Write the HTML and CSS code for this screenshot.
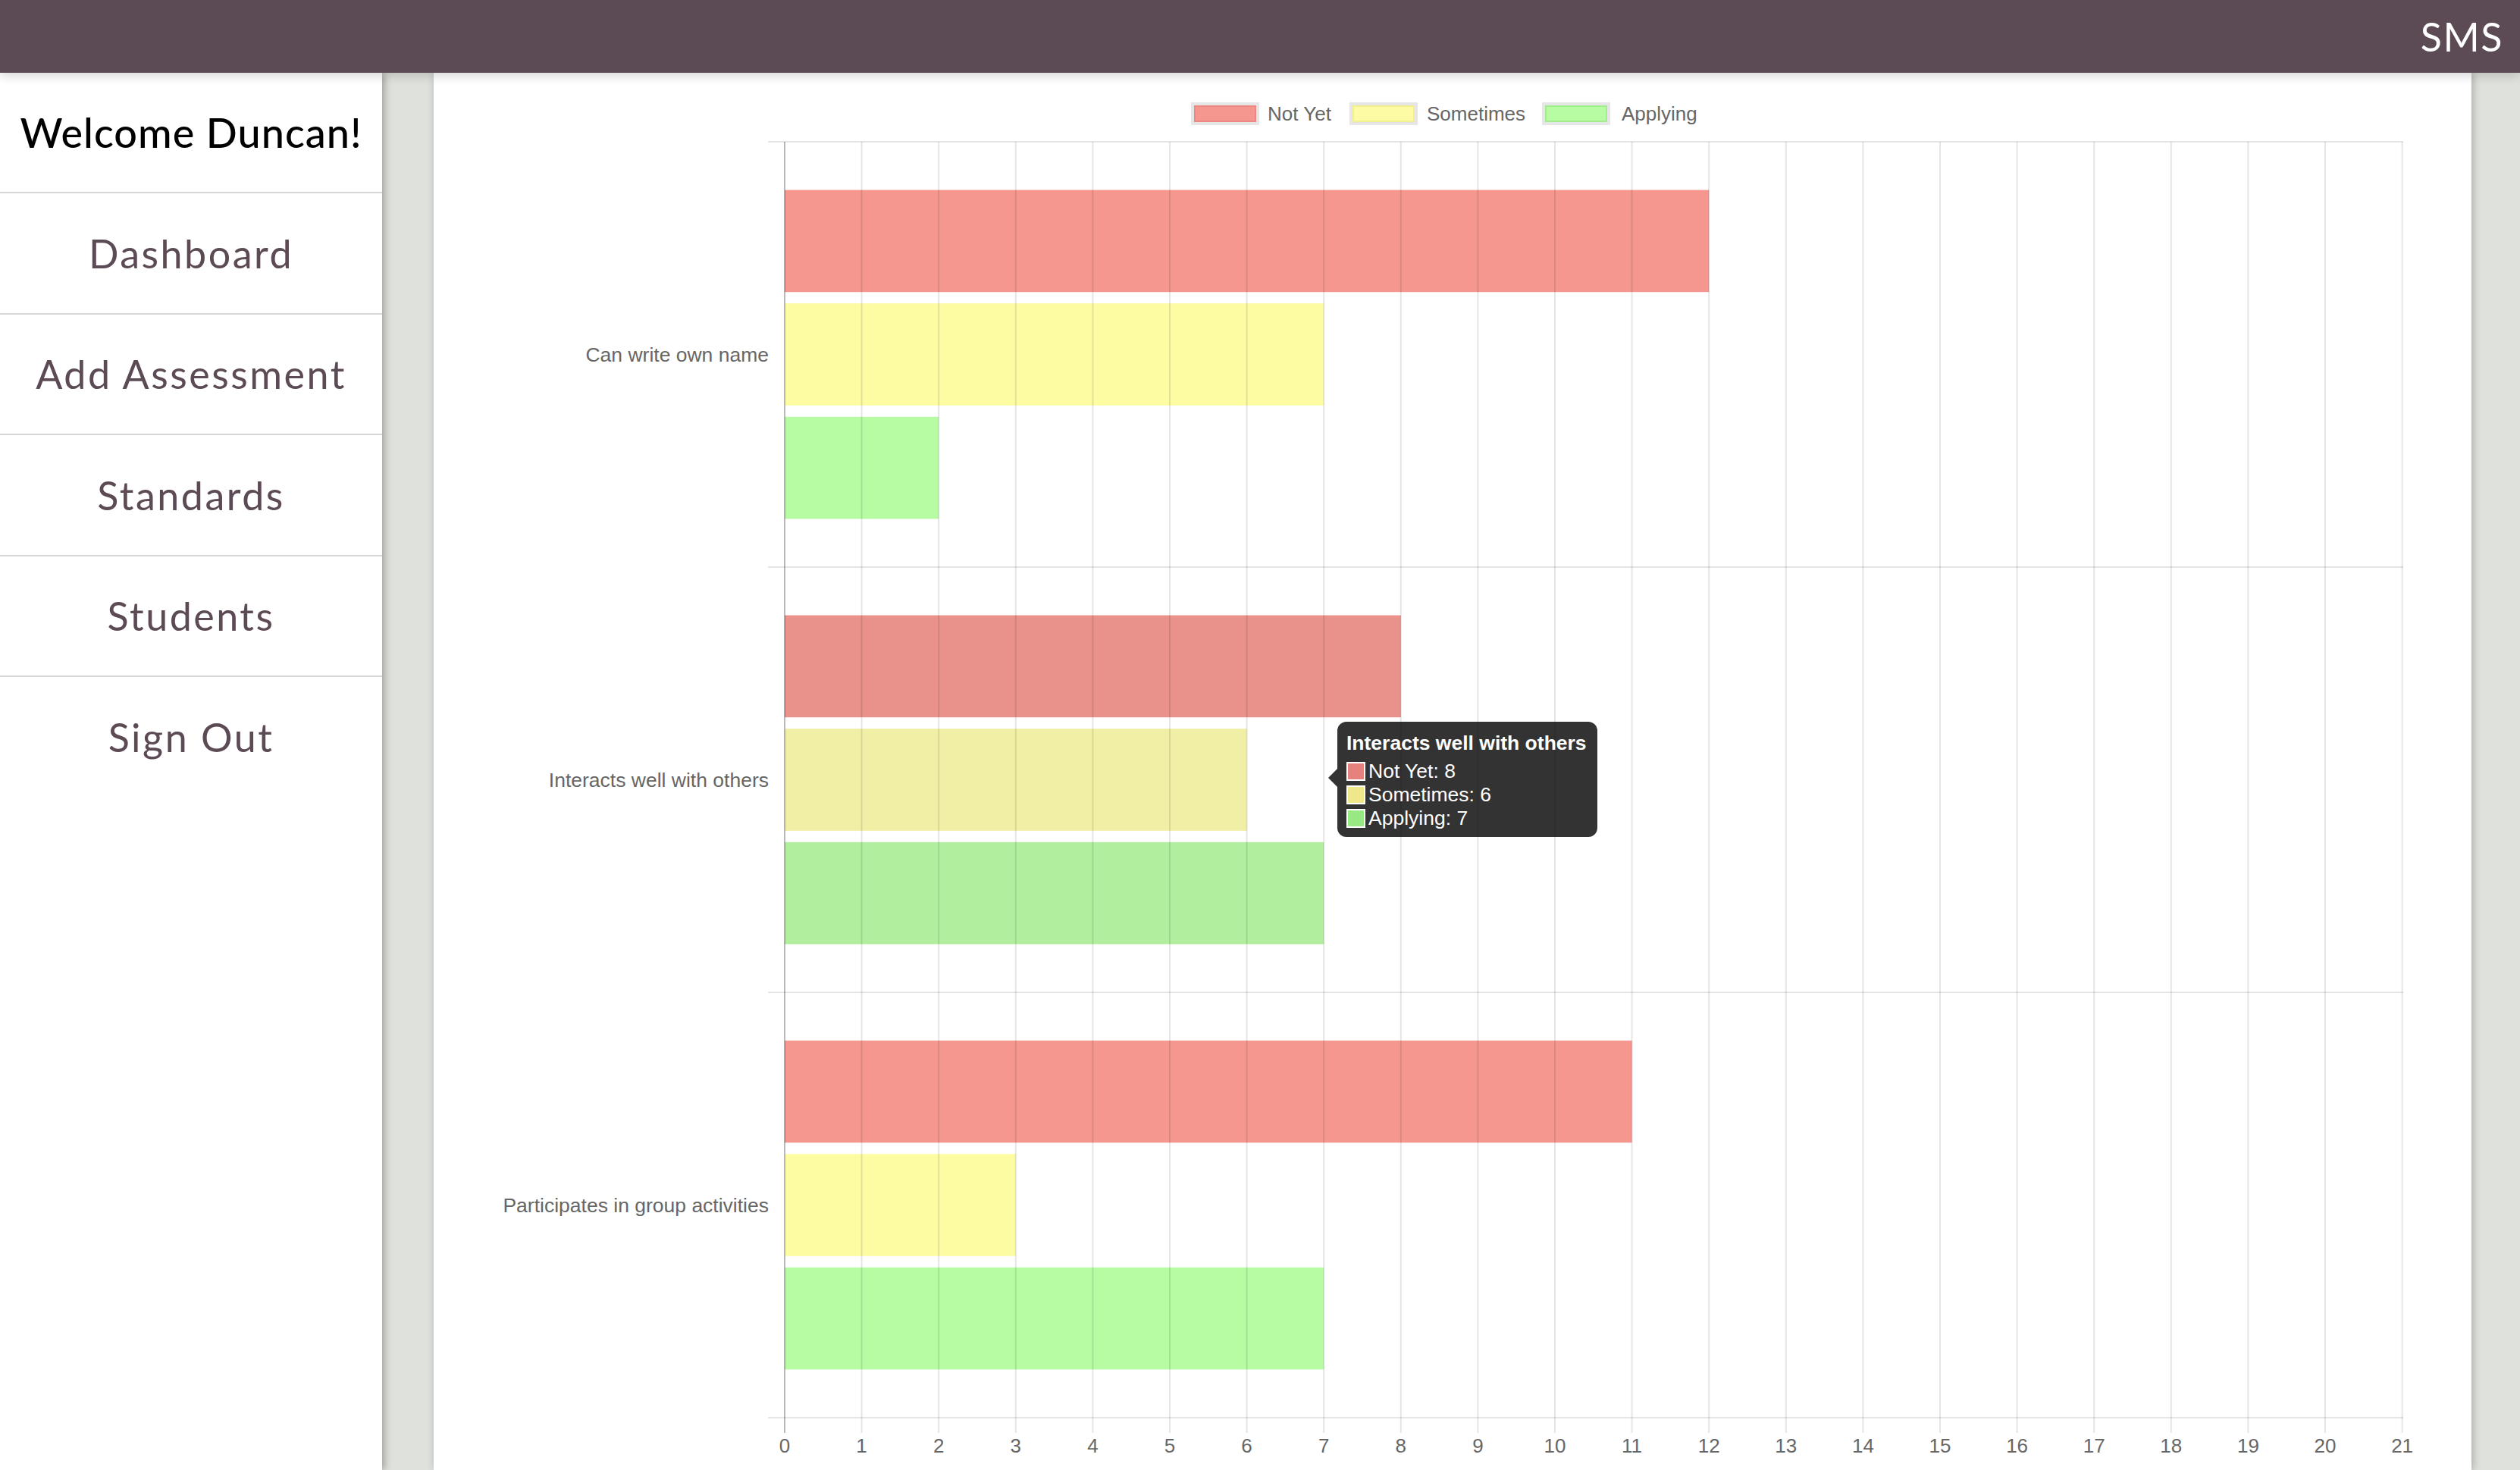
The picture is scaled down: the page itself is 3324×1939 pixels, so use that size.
FILE: index.html
```html
<!DOCTYPE html>
<html lang="en">
<head>
<meta charset="utf-8">
<title>SMS Dashboard</title>
<link rel="stylesheet" href="styles.css">
</head>
<body>
<header class="topbar">
  <span class="brand">SMS</span>
</header>
<div class="layout">
  <nav class="sidebar">
    <div class="welcome">Welcome Duncan!</div>
    <a class="nav-item" href="#">Dashboard</a>
    <a class="nav-item" href="#">Add Assessment</a>
    <a class="nav-item" href="#">Standards</a>
    <a class="nav-item" href="#">Students</a>
    <a class="nav-item nav-last" href="#">Sign Out</a>
  </nav>
  <main class="card">
    <svg class="chart" width="2688" height="1843" viewBox="0 0 2688 1843" xmlns="http://www.w3.org/2000/svg">
      <!-- legend -->
      <g class="legend">
        <rect x="1001" y="41" width="86" height="26" fill="#f5978f" stroke="#e6e6e6" stroke-width="4"/>
        <rect x="1004" y="44" width="80" height="20" fill="#f5978f" stroke="#ec8880" stroke-width="2"/>
        <text x="1100" y="63">Not Yet</text>
        <rect x="1210" y="41" width="86" height="26" fill="#fdfca5" stroke="#e6e6e6" stroke-width="4"/>
        <rect x="1213" y="44" width="80" height="20" fill="#fdfca5" stroke="#f2ef8e" stroke-width="2"/>
        <text x="1310" y="63">Sometimes</text>
        <rect x="1464" y="41" width="86" height="26" fill="#b7fba3" stroke="#e6e6e6" stroke-width="4"/>
        <rect x="1467" y="44" width="80" height="20" fill="#b7fba3" stroke="#a2ee8e" stroke-width="2"/>
        <text x="1567" y="63">Applying</text>
      </g>
      <!-- bars -->
      <g class="bars">
        <rect x="463" y="154.6" width="1219.2" height="134.6" fill="#f5978f"/>
        <rect x="463" y="304.2" width="711.2" height="134.6" fill="#fdfca3"/>
        <rect x="463" y="453.8" width="203.2" height="134.6" fill="#b7fba3"/>
        <rect x="463" y="715.6" width="812.8" height="134.6" fill="#e8928b"/>
        <rect x="463" y="865.2" width="609.6" height="134.6" fill="#f1efa5"/>
        <rect x="463" y="1014.8" width="711.2" height="134.6" fill="#b1ef9e"/>
        <rect x="463" y="1276.6" width="1117.6" height="134.6" fill="#f5978f"/>
        <rect x="463" y="1426.2" width="304.8" height="134.6" fill="#fdfca3"/>
        <rect x="463" y="1575.8" width="711.2" height="134.6" fill="#b7fba3"/>
      </g>
      <!-- grid -->
      <g class="grid" stroke="rgba(0,0,0,0.1)" stroke-width="2">
        <line x1="441" y1="91" x2="2598" y2="91"/>
        <line x1="441" y1="652" x2="2598" y2="652"/>
        <line x1="441" y1="1213" x2="2598" y2="1213"/>
        <line x1="441" y1="1774" x2="2598" y2="1774"/>
        <line x1="564.6" y1="91" x2="564.6" y2="1794"/>
        <line x1="666.2" y1="91" x2="666.2" y2="1794"/>
        <line x1="767.8" y1="91" x2="767.8" y2="1794"/>
        <line x1="869.4" y1="91" x2="869.4" y2="1794"/>
        <line x1="971" y1="91" x2="971" y2="1794"/>
        <line x1="1072.6" y1="91" x2="1072.6" y2="1794"/>
        <line x1="1174.2" y1="91" x2="1174.2" y2="1794"/>
        <line x1="1275.8" y1="91" x2="1275.8" y2="1794"/>
        <line x1="1377.4" y1="91" x2="1377.4" y2="1794"/>
        <line x1="1479" y1="91" x2="1479" y2="1794"/>
        <line x1="1580.6" y1="91" x2="1580.6" y2="1794"/>
        <line x1="1682.2" y1="91" x2="1682.2" y2="1794"/>
        <line x1="1783.8" y1="91" x2="1783.8" y2="1794"/>
        <line x1="1885.4" y1="91" x2="1885.4" y2="1794"/>
        <line x1="1987" y1="91" x2="1987" y2="1794"/>
        <line x1="2088.6" y1="91" x2="2088.6" y2="1794"/>
        <line x1="2190.2" y1="91" x2="2190.2" y2="1794"/>
        <line x1="2291.8" y1="91" x2="2291.8" y2="1794"/>
        <line x1="2393.4" y1="91" x2="2393.4" y2="1794"/>
        <line x1="2495" y1="91" x2="2495" y2="1794"/>
        <line x1="2596.6" y1="91" x2="2596.6" y2="1794"/>
        <line x1="463" y1="91" x2="463" y2="1794" stroke="rgba(0,0,0,0.28)"/>
      </g>
      <!-- y labels -->
      <g class="ylabels">
        <text x="442" y="381">Can write own name</text>
        <text x="442" y="942">Interacts well with others</text>
        <text x="442" y="1503">Participates in group activities</text>
      </g>
      <!-- x labels -->
      <g class="xlabels">
        <text x="463" y="1820">0</text>
        <text x="564.6" y="1820">1</text>
        <text x="666.2" y="1820">2</text>
        <text x="767.8" y="1820">3</text>
        <text x="869.4" y="1820">4</text>
        <text x="971" y="1820">5</text>
        <text x="1072.6" y="1820">6</text>
        <text x="1174.2" y="1820">7</text>
        <text x="1275.8" y="1820">8</text>
        <text x="1377.4" y="1820">9</text>
        <text x="1479" y="1820">10</text>
        <text x="1580.6" y="1820">11</text>
        <text x="1682.2" y="1820">12</text>
        <text x="1783.8" y="1820">13</text>
        <text x="1885.4" y="1820">14</text>
        <text x="1987" y="1820">15</text>
        <text x="2088.6" y="1820">16</text>
        <text x="2190.2" y="1820">17</text>
        <text x="2291.8" y="1820">18</text>
        <text x="2393.4" y="1820">19</text>
        <text x="2495" y="1820">20</text>
        <text x="2596.6" y="1820">21</text>
      </g>
    </svg>
    <div class="tooltip">
      <div class="tooltip-title">Interacts well with others</div>
      <div class="tooltip-row"><span class="swatch swatch-red"></span>Not Yet: 8</div>
      <div class="tooltip-row"><span class="swatch swatch-yellow"></span>Sometimes: 6</div>
      <div class="tooltip-row"><span class="swatch swatch-green"></span>Applying: 7</div>
    </div>
  </main>
</div>
</body>
</html>
```

FILE: styles.css
```css
html, body {
  margin: 0;
  padding: 0;
}

body {
  width: 3324px;
  height: 1939px;
  overflow: hidden;
  background: #dfe1dc;
  font-family: "Lato", "Open Sans", sans-serif;
}

.topbar {
  height: 96px;
  background: #5c4a55;
  display: flex;
  justify-content: flex-end;
  align-items: center;
  padding-right: 22px;
  position: relative;
  z-index: 3;
  box-shadow: 0 3px 14px rgba(0, 0, 0, 0.18);
}

.brand {
  color: #ffffff;
  font-size: 52px;
  letter-spacing: 1.5px;
}

.layout {
  display: flex;
  height: 1843px;
}

.sidebar {
  width: 504px;
  flex: none;
  background: #ffffff;
  display: flex;
  flex-direction: column;
  position: relative;
  z-index: 2;
  box-shadow: 3px 0 10px rgba(0, 0, 0, 0.3);
}

.welcome {
  height: 157px;
  border-bottom: 2px solid #d6d6d6;
  display: flex;
  align-items: center;
  justify-content: center;
  color: #000000;
  font-size: 54px;
  font-weight: 500;
  letter-spacing: 1px;
}

.nav-item {
  height: 157.5px;
  border-bottom: 2px solid #d6d6d6;
  display: flex;
  align-items: center;
  justify-content: center;
  color: #5c4a55;
  font-size: 52px;
  text-decoration: none;
  letter-spacing: 2.5px;
}

.nav-last {
  border-bottom: none;
}

.card {
  flex: none;
  width: 2688px;
  margin-left: 68px;
  background: #ffffff;
  position: relative;
  z-index: 1;
  box-shadow: 2px 0 10px rgba(0, 0, 0, 0.25);
}

.chart {
  display: block;
  font-family: "Liberation Sans", Arial, sans-serif;
}

.legend text {
  font-size: 26px;
  fill: #666666;
}

.ylabels text {
  font-size: 26.5px;
  fill: #666666;
  text-anchor: end;
}

.xlabels text {
  font-size: 26px;
  fill: #666666;
  text-anchor: middle;
}

.tooltip {
  position: absolute;
  left: 1192px;
  top: 856px;
  width: 319px;
  padding: 12px 12px 9px 12px;
  background: rgba(0, 0, 0, 0.8);
  border-radius: 12px;
  color: #ffffff;
  font-family: "Liberation Sans", Arial, sans-serif;
  font-size: 26.5px;
}

.tooltip::before {
  content: "";
  position: absolute;
  left: -12px;
  top: 62px;
  border-top: 12px solid transparent;
  border-bottom: 12px solid transparent;
  border-right: 12px solid rgba(0, 0, 0, 0.8);
}

.tooltip-title {
  font-weight: bold;
  line-height: 32px;
  margin-bottom: 6px;
  white-space: nowrap;
}

.tooltip-row {
  display: flex;
  align-items: center;
  height: 31px;
  white-space: nowrap;
}

.swatch {
  width: 21px;
  height: 21px;
  border: 2px solid #ffffff;
  margin-right: 4px;
  flex: none;
}

.swatch-red { background: #e5827e; }
.swatch-yellow { background: #efe88a; }
.swatch-green { background: #98e884; }
```
